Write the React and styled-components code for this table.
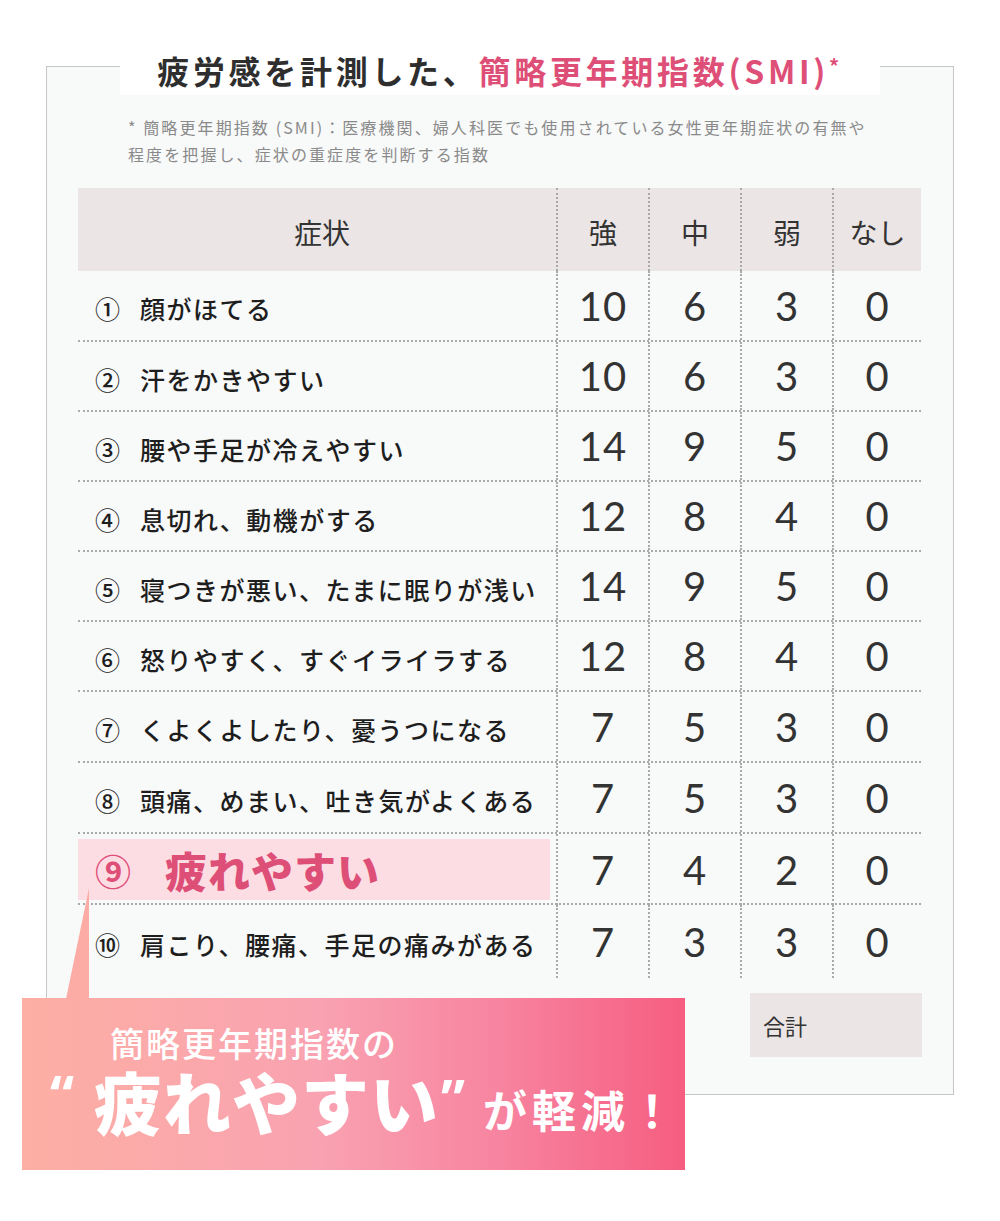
import React from 'react'
import styled, { createGlobalStyle } from 'styled-components'

const JP = '"Noto Sans CJK JP", "Noto Sans", sans-serif'
const NUM = 'Lato, "Noto Sans CJK JP", sans-serif'
const PINK = '#de4f78'
const HEAD_BG = '#ebe5e5'
const DOT = '2px dotted #a9a9a9'

const GlobalStyle = createGlobalStyle`
  body {
    margin: 0;
    background: #ffffff;
    font-family: ${JP};
    color: #333;
  }
`

const Page = styled.div`
  width: 1000px;
  height: 1221px;
  padding-top: 66px;
  box-sizing: border-box;
  overflow: hidden;
`

const Panel = styled.section`
  margin: 0 46px 0 46px;
  height: 1029px;
  box-sizing: border-box;
  border: 1px solid #c6c6c6;
  background: #f8f9f9;
`

const Heading = styled.h2`
  display: flex;
  justify-content: center;
  margin: -22px 0 0;
  height: 50px;
`
const HeadingText = styled.span`
  background: #fff;
  padding: 0 37px;
  font-size: 32px;
  line-height: 50px;
  font-weight: 700;
  letter-spacing: 3.7px;
  color: #2e2e2e;
  white-space: nowrap;
`
const Accent = styled.span`
  color: ${PINK};
  sup {
    font-size: 20px;
    vertical-align: 10px;
    line-height: 0;
  }
`

const Note = styled.p`
  margin: 19px 0 0 81px;
  font-size: 16px;
  line-height: 27px;
  letter-spacing: 2.1px;
  color: #8a8a8a;
  white-space: nowrap;
`

const Table = styled.div`
  margin: 20px 32px 0 31px;
`
const Row = styled.div`
  display: grid;
  grid-template-columns: 478px 92px 92px 92px 89px;
  height: ${p => p.$h}px;
  box-sizing: border-box;
  border-bottom: ${p => (p.$line ? DOT : 'none')};
  background: ${p => (p.$head ? HEAD_BG : 'transparent')};
`
const HeadCell = styled.div`
  display: flex;
  align-items: center;
  justify-content: center;
  font-size: 28px;
  color: #333;
  border-left: ${p => (p.$first ? 'none' : DOT)};
  padding: 4px ${p => (p.$first ? '0 0 10px' : '0 0 0')};
`
const Symptom = styled.div`
  display: flex;
  align-items: center;
  padding: 5px 0 0 17px;
  font-size: 25px;
  font-weight: 500;
  letter-spacing: 1.5px;
  color: #1e1e1e;
  white-space: nowrap;
`
const Mark = styled.span`
  width: 45px;
  flex: none;
  letter-spacing: 0;
`
const Highlight = styled.div`
  display: flex;
  align-items: center;
  margin: 5px 6px 5px 0;
  padding-left: 17px;
  background: #fddde4;
  color: ${PINK};
  font-weight: 900;
  white-space: nowrap;
`
const HiMark = styled.span`
  width: 70px;
  font-size: 36px;
  font-weight: 700;
`
const HiText = styled.span`
  font-size: 42px;
  letter-spacing: 1px;
`
const Score = styled.div`
  display: flex;
  align-items: center;
  justify-content: center;
  border-left: ${DOT};
  font-family: ${NUM};
  font-size: 40px;
  color: #333;
  letter-spacing: 1px;
`

const TotalRow = styled.div`
  display: flex;
  justify-content: flex-end;
  margin: 15px 31px 0 0;
`
const TotalBox = styled.div`
  width: 172px;
  height: 64px;
  box-sizing: border-box;
  padding: 0 13px;
  display: flex;
  align-items: center;
  background: ${HEAD_BG};
  font-size: 22px;
  color: #333;
`

const Callout = styled.div`
  position: relative;
  margin: -97px 0 0 22px;
  width: 663px;
  height: 172px;
  box-sizing: border-box;
  padding: 25px 0 0 28px;
  background: linear-gradient(90deg, #fdafa4 0%, #f9a2b1 45%, #f784a0 72%, #f65d80 100%);
  color: #fff;
  &::before {
    content: '';
    position: absolute;
    left: 44px;
    top: -110px;
    width: 23px;
    height: 111px;
    background: #fcaca5;
    clip-path: polygon(100% 0, 100% 100%, 0 100%);
  }
`
const Lead = styled.div`
  margin-left: 60px;
  font-size: 34px;
  line-height: 40px;
  font-weight: 500;
  letter-spacing: 2px;
  white-space: nowrap;
`
const Punch = styled.div`
  display: flex;
  align-items: flex-end;
  margin-top: 2px;
  white-space: nowrap;
`
const Quote = styled.span`
  align-self: flex-start;
  font-family: "Noto Sans", sans-serif;
  font-weight: 700;
  font-size: 54px;
  line-height: 54px;
  margin: ${p => (p.$close ? '6px 18px 0 2px' : '2px 20px 0 0')};
`
const Big = styled.span`
  font-size: 68px;
  line-height: 72px;
  font-weight: 900;
  letter-spacing: 1px;
`
const Tail = styled.span`
  font-size: 44px;
  line-height: 56px;
  font-weight: 700;
  letter-spacing: 5px;
`

const symptoms = [
  ['①', '顔がほてる', [10, 6, 3, 0]],
  ['②', '汗をかきやすい', [10, 6, 3, 0]],
  ['③', '腰や手足が冷えやすい', [14, 9, 5, 0]],
  ['④', '息切れ、動機がする', [12, 8, 4, 0]],
  ['⑤', '寝つきが悪い、たまに眠りが浅い', [14, 9, 5, 0]],
  ['⑥', '怒りやすく、すぐイライラする', [12, 8, 4, 0]],
  ['⑦', 'くよくよしたり、憂うつになる', [7, 5, 3, 0]],
  ['⑧', '頭痛、めまい、吐き気がよくある', [7, 5, 3, 0]],
  ['⑨', '疲れやすい', [7, 4, 2, 0], true],
  ['⑩', '肩こり、腰痛、手足の痛みがある', [7, 3, 3, 0]],
]
const heights = [71, 70, 70, 70, 70, 70, 71, 71, 71, 73]

export default function App() {
  return (
    <Page>
      <GlobalStyle />
      <Panel>
        <Heading>
          <HeadingText>
            疲労感を計測した、<Accent>簡略更年期指数(SMI)<sup>*</sup></Accent>
          </HeadingText>
        </Heading>
        <Note>
          * 簡略更年期指数 (SMI)：医療機関、婦人科医でも使用されている女性更年期症状の有無や
          <br />
          程度を把握し、症状の重症度を判断する指数
        </Note>
        <Table>
          <Row $h={83} $head>
            <HeadCell $first>症状</HeadCell>
            <HeadCell>強</HeadCell>
            <HeadCell>中</HeadCell>
            <HeadCell>弱</HeadCell>
            <HeadCell>なし</HeadCell>
          </Row>
          {symptoms.map(([mark, text, scores, hi], i) => (
            <Row key={mark} $h={heights[i]} $line={i < symptoms.length - 1}>
              {hi ? (
                <Highlight>
                  <HiMark>{mark}</HiMark>
                  <HiText>{text}</HiText>
                </Highlight>
              ) : (
                <Symptom>
                  <Mark>{mark}</Mark>
                  {text}
                </Symptom>
              )}
              {scores.map((s, j) => (
                <Score key={j}>{s}</Score>
              ))}
            </Row>
          ))}
        </Table>
        <TotalRow>
          <TotalBox>合計</TotalBox>
        </TotalRow>
      </Panel>
      <Callout>
        <Lead>簡略更年期指数の</Lead>
        <Punch>
          <Quote>“</Quote>
          <Big>疲れやすい</Big>
          <Quote $close>”</Quote>
          <Tail>が軽減！</Tail>
        </Punch>
      </Callout>
    </Page>
  )
}
